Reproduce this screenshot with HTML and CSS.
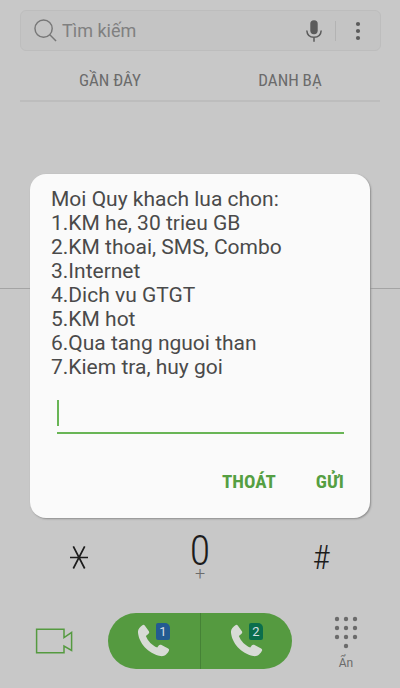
FILE: index.html
```html
<!DOCTYPE html>
<html lang="vi">
<head>
<meta charset="utf-8">
<meta name="viewport" content="width=device-width, initial-scale=1">
<title>Điện thoại</title>
<link rel="stylesheet" href="styles.css">
</head>
<body>
<main class="phone">
  <form class="search">
    <svg class="search-icon" viewBox="0 0 24 24" aria-hidden="true"><circle cx="10" cy="10" r="9"/><path d="M16.500 16.500 23 23"/></svg>
    <input class="search-input" type="search" placeholder="Tìm kiếm" aria-label="Tìm kiếm">
    <button class="icon-button mic" type="button" aria-label="Giọng nói">
      <svg viewBox="0 0 18 24" width="18" height="24"><rect x="5.3" y="1.2" width="7.4" height="14" rx="3.6" fill="#5b5b5b"/><path d="M1.8 11.5c.3 4.400 3.300 6.800 7.200 6.800s6.900-2.400 7.200-6.800M9 18v4.800" fill="none" stroke="#5b5b5b" stroke-width="1.500"/></svg>
    </button>
    <button class="icon-button more" type="button" aria-label="Thêm">
      <svg viewBox="0 0 6 20" width="6" height="20" fill="#5b5b5b"><circle cx="3" cy="3" r="2.100"/><circle cx="3" cy="10" r="2.100"/><circle cx="3" cy="17" r="2.100"/></svg>
    </button>
  </form>
  <nav class="tabs">
    <a class="tab" href="#recent">GẦN ĐÂY</a>
    <a class="tab" href="#contacts">DANH BẠ</a>
  </nav>
  <section class="recent" id="recent"></section>
  <section class="dialer">
    <div class="keys">
      <button class="key" type="button" aria-label="Sao">
        <svg viewBox="0 0 20 26" width="20" height="26" fill="none" stroke="#1c1c1c" stroke-width="1.700"><path d="M1 13.500h18M4.300 2.300 15.700 24.500M15.700 2.300 4.300 24.500"/></svg>
      </button>
      <button class="key zero" type="button"><span class="digit">0</span><span class="plus">+</span></button>
      <button class="key hash" type="button">#</button>
    </div>
    <div class="actions">
      <button class="video" type="button" aria-label="Gọi video">
        <svg viewBox="0 0 38 28" width="38" height="28" fill="none" stroke="#559a40" stroke-width="1.500"><path d="M1.600 2.300H29V10.600L36.600 5.500V23.500L29 19V25.800H1.600Z"/></svg>
      </button>
      <div class="call">
        <button class="sim" type="button" aria-label="Gọi SIM 1">
          <svg class="handset" viewBox="0 0 36 36" aria-hidden="true"><path d="M8.200 1.700 12.600 7.800Q13.500 9.100 12.200 10.300L9.400 12.600C11.500 18 16 22.500 21.400 25L23.200 22.600Q24.100 21.400 25.500 22.100L33 26Q34.600 26.900 33.800 28.400C32.300 31.500 29 35 24.600 34C12 31.500 1.500 20 1 8.300C1 5.100 3.500 3 5.700 1.300Q7.200.200 8.200 1.700Z"/></svg>
          <span class="badge badge-one">1</span>
        </button>
        <button class="sim" type="button" aria-label="Gọi SIM 2">
          <svg class="handset" viewBox="0 0 36 36" aria-hidden="true"><path d="M8.200 1.700 12.600 7.800Q13.500 9.100 12.200 10.300L9.400 12.600C11.500 18 16 22.500 21.400 25L23.200 22.600Q24.100 21.400 25.500 22.100L33 26Q34.600 26.900 33.800 28.400C32.300 31.500 29 35 24.600 34C12 31.500 1.500 20 1 8.300C1 5.100 3.500 3 5.700 1.300Q7.200.200 8.200 1.700Z"/></svg>
          <span class="badge badge-two">2</span>
        </button>
      </div>
      <button class="hide" type="button">
        <svg viewBox="0 0 24 33" width="24" height="33" fill="#6b6b6b" aria-hidden="true"><circle cx="3" cy="3" r="2.200"/><circle cx="12" cy="3" r="2.200"/><circle cx="21" cy="3" r="2.200"/><circle cx="3" cy="12" r="2.200"/><circle cx="12" cy="12" r="2.200"/><circle cx="21" cy="12" r="2.200"/><circle cx="3" cy="21" r="2.200"/><circle cx="12" cy="21" r="2.200"/><circle cx="21" cy="21" r="2.200"/><circle cx="12" cy="30" r="2.200"/></svg>
        <span>Ẩn</span>
      </button>
    </div>
  </section>
</main>
<div class="overlay">
  <form class="dialog" role="dialog" aria-labelledby="message">
    <label class="message" id="message" for="reply">Moi Quy khach lua chon:<br>1.KM he, 30 trieu GB<br>2.KM thoai, SMS, Combo<br>3.Internet<br>4.Dich vu GTGT<br>5.KM hot<br>6.Qua tang nguoi than<br>7.Kiem tra, huy goi</label>
    <div class="field">
      <span class="caret"></span>
      <input class="reply" id="reply" type="text" autocomplete="off">
    </div>
    <div class="buttons">
      <button class="text-button" type="button">THOÁT</button>
      <button class="text-button" type="submit">GỬI</button>
    </div>
  </form>
</div>
</body>
</html>
```
FILE: styles.css
```css
* {
  box-sizing: border-box;
}

body {
  margin: 0;
  background: #c8c8c8;
  color: #4a4a4a;
  font-family: Roboto, "Noto Sans", sans-serif;
}

button,
input {
  margin: 0;
  padding: 0;
  border: 0;
  background: none;
  color: inherit;
  font: inherit;
}

svg {
  display: block;
}

.phone {
  display: flex;
  flex-direction: column;
  min-height: 100vh;
}

.search {
  display: flex;
  align-items: center;
  height: 41px;
  margin: 10px 19px 0 20px;
  padding-left: 13px;
  border: 1px solid #bdbdbd;
  border-radius: 6px;
  background: #c4c4c4;
}

.search-icon {
  flex: none;
  width: 23px;
  height: 23px;
  fill: none;
  stroke: #777;
  stroke-width: 1.5;
}

.search-input {
  flex: 1;
  min-width: 0;
  height: 100%;
  padding-left: 5px;
  font-size: 18px;
}

.search-input::placeholder {
  color: #808080;
  opacity: 1;
}

.icon-button {
  display: flex;
  align-items: center;
  justify-content: center;
  width: 44px;
  height: 20px;
}

.mic {
  border-right: 1px solid #b3b3b3;
}

.tabs {
  display: grid;
  grid-template-columns: 1fr 1fr;
  height: 51px;
  margin: 0 20px;
  border-bottom: 2px solid #bdbdbd;
}

.tab {
  display: flex;
  align-items: center;
  justify-content: center;
  padding-top: 8px;
  color: #6b6b6b;
  font-family: "Roboto Condensed", Roboto, sans-serif;
  font-size: 17px;
  text-decoration: none;
}

.recent {
  flex: 1;
}

.dialer {
  display: flex;
  flex-direction: column;
  justify-content: flex-end;
  min-height: 400px;
  border-top: 1px solid #a4a4a4;
}

.keys {
  display: grid;
  grid-template-columns: repeat(3, 1fr);
  align-items: center;
  margin: 0 18px;
  color: #1c1c1c;
  font-family: "Roboto Condensed", Roboto, sans-serif;
  font-weight: 300;
}

.key {
  display: flex;
  flex-direction: column;
  align-items: center;
  justify-content: center;
}

.digit {
  font-size: 42px;
  line-height: 34px;
}

.plus {
  color: #6b6b6b;
  font-family: Roboto, sans-serif;
  font-size: 18px;
  line-height: 12px;
}

.hash {
  font-size: 34px;
  line-height: 40px;
}

.actions {
  display: grid;
  grid-template-columns: 108px 1fr 108px;
  align-items: center;
  height: 108px;
  padding-top: 14px;
}

.video,
.hide {
  display: flex;
  flex-direction: column;
  align-items: center;
}

.hide {
  gap: 6px;
  padding-top: 4px;
  color: #6b6b6b;
  font-size: 12px;
  line-height: 16px;
}

.call {
  display: grid;
  grid-template-columns: 1fr 1fr;
  height: 56px;
  border-radius: 28px;
  background: #559a40;
}

.sim {
  position: relative;
  display: flex;
  align-items: center;
  justify-content: center;
}

.sim + .sim {
  border-left: 1px solid #458236;
}

.handset {
  width: 34px;
  height: 34px;
  fill: #d8dbd6;
}

.badge {
  position: absolute;
  top: 10px;
  left: 48px;
  width: 14px;
  height: 17px;
  border-radius: 2px 5px 2px 2px;
  color: #d6dfe3;
  font-size: 13px;
  line-height: 17px;
  text-align: center;
}

.badge-one {
  background: #235b91;
}

.badge-two {
  background: #0b6e4c;
}

.overlay {
  position: absolute;
  inset: 0;
  display: flex;
  align-items: center;
  justify-content: center;
  padding: 4px 30px 0;
}

.dialog {
  display: flex;
  flex-direction: column;
  width: 100%;
  padding: 13px 20px 18px 21px;
  border-radius: 16px;
  background: #fafafa;
  box-shadow: 1px 1px 2px #8c8c8c;
}

.message {
  font-size: 21px;
  line-height: 24px;
}

.field {
  position: relative;
  margin: 15px 6px 0;
}

.caret {
  position: absolute;
  top: 6px;
  left: 0;
  width: 2px;
  height: 26px;
  background: #69b556;
}

.reply {
  display: block;
  width: 100%;
  height: 40px;
  border-bottom: 2px solid #69b556;
  outline: none;
  font-size: 21px;
}

.buttons {
  display: flex;
  justify-content: flex-end;
  gap: 40px;
  margin: 28px 6px 0;
}

.text-button {
  height: 38px;
  color: #559f42;
  font-family: "Roboto Condensed", Roboto, sans-serif;
  font-size: 19px;
  font-weight: 700;
}
```
